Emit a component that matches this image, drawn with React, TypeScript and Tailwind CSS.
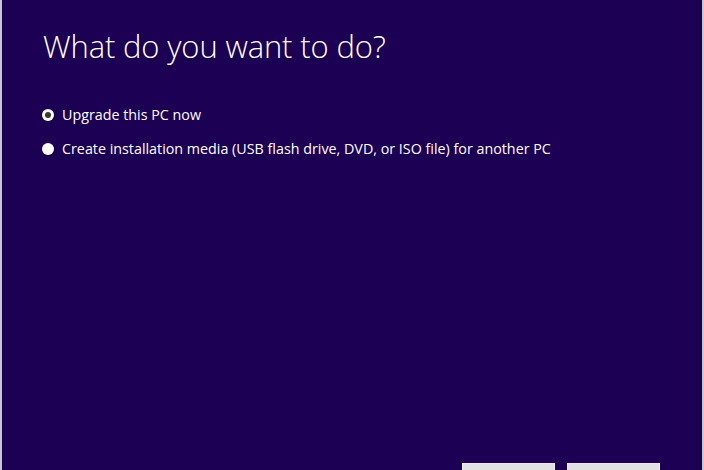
import React from 'react';

const options = [
  { label: 'Upgrade this PC now', checked: true },
  { label: 'Create installation media (USB flash drive, DVD, or ISO file) for another PC', checked: false },
];

export default function App() {
  return (
    <div className="w-[704px] h-[470px] bg-[#1b0053] flex overflow-hidden font-['Open_Sans',sans-serif]">
      {/* left window edge */}
      <div className="w-[2px] bg-[#c9c6d6]" />
      <div className="flex-1 flex flex-col pl-[40px] pt-[26px]">
        <h1 className="pl-[1px] text-[31px] font-light text-white leading-[40px] tracking-[-0.15px]">What do you want to do?</h1>

        <div className="mt-[39px] flex flex-col gap-[14px]">
          {options.map((o) => (
            <label key={o.label} className="flex items-center gap-[8px] text-[14.3px] text-white leading-[20px]">
              {o.checked ? (
                <span className="w-[12px] h-[12px] rounded-full bg-white flex items-center justify-center">
                  <span className="w-[6px] h-[6px] rounded-full bg-[#3a3a2a]" />
                </span>
              ) : (
                <span className="w-[12px] h-[12px] rounded-full bg-white" />
              )}
              {o.label}
            </label>
          ))}
        </div>

        <div className="mt-auto flex justify-end gap-[12px] pr-[40px]">
          <button className="w-[93px] h-[7px] bg-[#e1e1e1] border border-b-0 border-[#f0f0f0]" />
          <button className="w-[93px] h-[7px] bg-[#e1e1e1] border border-b-0 border-[#f0f0f0]" />
        </div>
      </div>
      {/* right window edge */}
      <div className="w-[2px] bg-[#13003d]" />
      <div className="w-[2px] bg-[#c9c6d6]" />
    </div>
  );
}
